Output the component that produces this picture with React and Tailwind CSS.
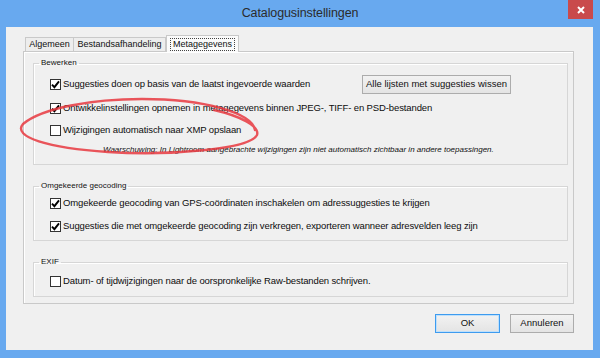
import React from 'react';

function CheckBox({ checked }) {
    return (
        <span className="w-[11px] h-[11px] shrink-0 border border-[#333] bg-white flex items-center justify-center">
            {checked && (
                <svg width="9" height="9" viewBox="0 0 9 9">
                    <path d="M1 4.6 L3.4 7.2 L8 1.4" fill="none" stroke="#000" strokeWidth="1.9" />
                </svg>
            )}
        </span>
    );
}

function Row({ checked, children, className = '' }) {
    return (
        <div className={`flex items-center h-[20px] pl-[16px] ${className}`}>
            <CheckBox checked={checked} />
            <span className="ml-[2px] text-[9.5px] tracking-[-0.12px] text-[#0d0d0d] whitespace-nowrap">{children}</span>
        </div>
    );
}

function Group({ title, children, className = '' }) {
    return (
        <fieldset className={`ml-[9px] mr-[5px] border border-[#d6d6d6] shadow-[inset_1px_1px_0_#fff] ${className}`}>
            <legend className="ml-[5px] px-[2px] h-[12px] leading-[12px] text-[8px] text-[#111]">{title}</legend>
            {children}
        </fieldset>
    );
}

function Tab({ label, width, active }) {
    if (active) {
        return (
            <div className={`${width} h-[17px] relative z-10 -mb-px bg-[#fbfbfb] border border-b-0 border-[#c9c9c9] flex items-center justify-center`}>
                <span className="px-[2px] leading-[11px] border border-dotted border-[#444] text-[9px] text-[#111]">{label}</span>
            </div>
        );
    }
    return (
        <div className={`${width} h-[14px] bg-[#ededed] border border-b-0 border-l-0 first:border-l border-[#c9c9c9] flex items-center justify-center text-[9px] text-[#111]`}>
            {label}
        </div>
    );
}

function Button({ children, primary, width }) {
    return (
        <div
            className={`${width} h-[19px] flex items-center justify-center text-[9.5px] text-[#111] bg-gradient-to-b from-[#f2f2f2] to-[#e4e4e4] border ${primary ? 'border-[#3d9bef] shadow-[inset_0_0_0_1px_#bfe0fb]' : 'border-[#acacac]'}`}
        >
            {children}
        </div>
    );
}

export default function App() {
    return (
        <div className="w-[600px] h-[358px] relative overflow-hidden bg-[#68a9ef] font-['Liberation_Sans',Arial,sans-serif] flex flex-col">
            {/* title bar */}
            <div className="h-[27px] shrink-0 flex items-center justify-center">
                <span className="text-[12.5px] tracking-[-0.1px] text-[#2b2b2b]">Catalogusinstellingen</span>
            </div>
            <div className="absolute right-[7px] top-0 w-[25px] h-[19px] bg-[#c94a4c] flex items-center justify-center">
                <svg width="8" height="8" viewBox="0 0 8 8">
                    <path d="M1 1 L7 7 M7 1 L1 7" stroke="#fff" strokeWidth="2" />
                </svg>
            </div>

            {/* dialog body */}
            <div className="ml-[6px] w-[587px] h-[323px] bg-[#f0f0f0] pl-[17px] pt-[8px]">
                <div className="w-[551px]">
                    <div className="flex items-end ml-[2px] h-[16px]">
                        <Tab label="Algemeen" width="w-[49px]" />
                        <Tab label="Bestandsafhandeling" width="w-[92px]" />
                        <Tab label="Metagegevens" width="w-[73px]" active />
                    </div>

                    <div className="h-[253px] border border-[#c9c9c9] shadow-[inset_1px_1px_0_#fff] bg-[#f0f0f0] pt-[5px]">
                        <Group title="Bewerken" className="pb-[8px]">
                            <div className="flex items-center justify-between pr-[56px] mt-[5px]">
                                <Row checked>Suggesties doen op basis van de laatst ingevoerde waarden</Row>
                                <Button width="w-[149px]">Alle lijsten met suggesties wissen</Button>
                            </div>
                            <Row checked className="mt-[4px]">Ontwikkelinstellingen opnemen in metagegevens binnen JPEG-, TIFF- en PSD-bestanden</Row>
                            <Row className="mt-[2px]">Wijzigingen automatisch naar XMP opslaan</Row>
                            <div className="mt-[4px] h-[12px] leading-[12px] pl-[69px] text-[8px] italic text-[#111] whitespace-nowrap">
                                Waarschuwing: In Lightroom aangebrachte wijzigingen zijn niet automatisch zichtbaar in andere toepassingen.
                            </div>
                        </Group>

                        <Group title="Omgekeerde geocoding" className="mt-[15px] pb-[4px]">
                            <Row checked className="mt-[1px]">Omgekeerde geocoding van GPS-coördinaten inschakelen om adressuggesties te krijgen</Row>
                            <Row checked className="mt-[3px]">Suggesties die met omgekeerde geocoding zijn verkregen, exporteren wanneer adresvelden leeg zijn</Row>
                        </Group>

                        <Group title="EXIF" className="mt-[15px] pb-[5px]">
                            <Row className="mt-[3px]">Datum- of tijdwijzigingen naar de oorspronkelijke Raw-bestanden schrijven.</Row>
                        </Group>
                    </div>

                    <div className="mt-[10px] flex justify-end gap-[10px]">
                        <Button primary width="w-[65px]">OK</Button>
                        <Button width="w-[64px]">Annuleren</Button>
                    </div>
                </div>
            </div>

            {/* red annotation drawn over the screenshot */}
            <svg className="absolute inset-0 pointer-events-none" width="600" height="358" viewBox="0 0 600 358">
                <path
                    d="M255 130 C252 113 205 99 142 99 C92 99 42 108 23 124 C12 137 48 148 108 152 C170 156 250 149 257 135 C260 126 240 116 214 110"
                    fill="none"
                    stroke="#e8383f"
                    strokeOpacity="0.85"
                    strokeWidth="2.4"
                    strokeLinecap="round"
                />
            </svg>
        </div>
    );
}
